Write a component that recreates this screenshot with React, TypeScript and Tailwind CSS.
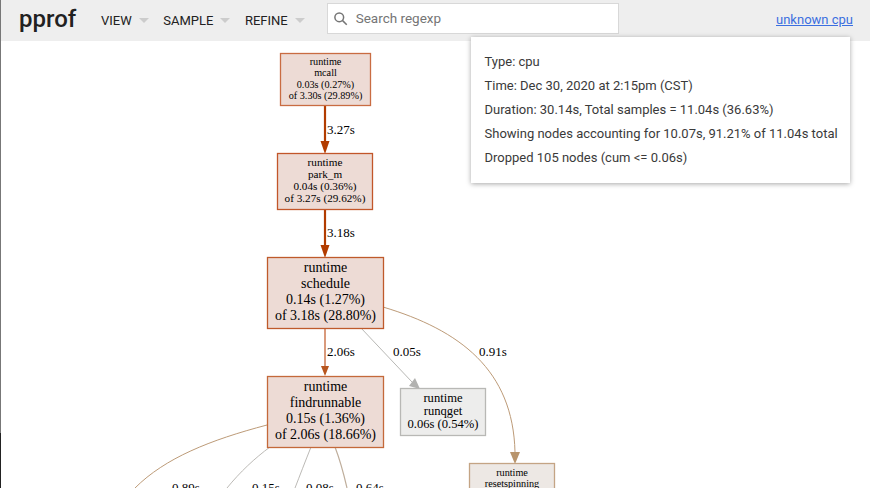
const menus = ["VIEW", "SAMPLE", "REFINE"];

const details = [
  "Type: cpu",
  "Time: Dec 30, 2020 at 2:15pm (CST)",
  "Duration: 30.14s, Total samples = 11.04s (36.63%)",
  "Showing nodes accounting for 10.07s, 91.21% of 11.04s total",
  "Dropped 105 nodes (cum <= 0.06s)",
];

type GraphNode = {
  x: number;
  y: number;
  w: number;
  h: number;
  fill: string;
  stroke: string;
  size: number;
  lines: [string, number][];
};

const nodes: GraphNode[] = [
  {
    x: 280, y: 53, w: 90, h: 52, fill: "#eddbd5", stroke: "#c96c42", size: 10.2,
    lines: [["runtime", 65], ["mcall", 76], ["0.03s (0.27%)", 88], ["of 3.30s (29.89%)", 99]],
  },
  {
    x: 277, y: 153, w: 95, h: 56, fill: "#eddbd5", stroke: "#c2562a", size: 11.2,
    lines: [["runtime", 166], ["park_m", 178], ["0.04s (0.36%)", 190], ["of 3.27s (29.62%)", 202]],
  },
  {
    x: 267, y: 257, w: 116, h: 71, fill: "#eddbd5", stroke: "#bf5a2b", size: 14,
    lines: [["runtime", 272], ["schedule", 288], ["0.14s (1.27%)", 304], ["of 3.18s (28.80%)", 320]],
  },
  {
    x: 267, y: 376, w: 116, h: 71, fill: "#eddbd5", stroke: "#c4693a", size: 14,
    lines: [["runtime", 391], ["findrunnable", 407], ["0.15s (1.36%)", 423], ["of 2.06s (18.66%)", 439]],
  },
  {
    x: 400, y: 388, w: 85, h: 47, fill: "#ededec", stroke: "#b8b8b5", size: 12.6,
    lines: [["runtime", 402], ["runqget", 415], ["0.06s (0.54%)", 428]],
  },
  {
    x: 469, y: 463, w: 85, h: 40, fill: "#ede8e4", stroke: "#c4a484", size: 10.2,
    lines: [["runtime", 476], ["resetspinning", 487]],
  },
];

const labels: [string, number, number][] = [
  ["3.27s", 327, 134],
  ["3.18s", 327, 237],
  ["2.06s", 327, 356],
  ["0.05s", 393, 356],
  ["0.91s", 479, 356],
  ["0.89s", 172, 492],
  ["0.15s", 252, 492],
  ["0.08s", 306, 492],
  ["0.64s", 356, 492],
];

function CallGraph() {
  return (
    <svg viewBox="0 41 870 447" className="block w-[870px] h-[447px]">
      {/* edges */}
      <path d="M325 105 L325 143" fill="none" stroke="#b23c00" strokeWidth="2.2" />
      <path d="M320.5 141 L325 154 L329.5 141 Z" fill="#b23c00" />
      <path d="M325 209 L325 247" fill="none" stroke="#b23c00" strokeWidth="2.2" />
      <path d="M320.5 245 L325 258 L329.5 245 Z" fill="#b23c00" />
      <path d="M325 328 L325 368" fill="none" stroke="#d99a7c" strokeWidth="2" />
      <path d="M321 366 L325 376 L329 366 Z" fill="#b8561f" />
      <path d="M361 328 L412 382" fill="none" stroke="#b8b8b5" strokeWidth="1" />
      <path d="M409 386 L420 389 L415 378 Z" fill="#b2b2b0" />
      <path d="M383 307 C460 330 513 370 515 452" fill="none" stroke="#bd9b78" strokeWidth="1" />
      <path d="M510 452 L515 464 L520 452 Z" fill="#b8946c" />
      <path d="M267 425 C210 440 165 458 135 488" fill="none" stroke="#bd9b78" strokeWidth="1" />
      <path d="M270 447 C255 458 240 472 227 488" fill="none" stroke="#bcbab6" strokeWidth="1" />
      <path d="M311 447 C305 462 300 475 295 488" fill="none" stroke="#bcbab6" strokeWidth="1" />
      <path d="M335 447 C340 460 344 475 347 488" fill="none" stroke="#bfae9c" strokeWidth="1.2" />

      {nodes.map((n) => (
        <g key={n.y}>
          <rect x={n.x + 0.5} y={n.y + 0.5} width={n.w} height={n.h} fill={n.fill} stroke={n.stroke} strokeWidth="1.3" />
          {n.lines.map(([text, y]) => (
            <text
              key={text}
              x={n.x + n.w / 2 + 0.5}
              y={y}
              textAnchor="middle"
              fontSize={n.size}
              fontFamily="'Liberation Serif', serif"
              fill="#000"
            >
              {text}
            </text>
          ))}
        </g>
      ))}

      {labels.map(([text, x, y]) => (
        <text key={text + x} x={x} y={y} fontSize="13" fontFamily="'Liberation Serif', serif" fill="#000">
          {text}
        </text>
      ))}
    </svg>
  );
}

export default function App() {
  return (
    <div className="relative h-[488px] w-[870px] overflow-hidden bg-white font-['Roboto',sans-serif]">
      <header className="flex h-[41px] items-center bg-[#eeeeee] pl-[19px]">
        <h1 className="w-[82px] text-[24px] leading-none font-medium text-[#212121] mb-[3px]">pprof</h1>
        <nav className="flex items-center gap-[14.5px]">
          {menus.map((m) => (
            <div key={m} className="flex items-center gap-[7px] text-[13px] text-[#212121]">
              {m}
              <span className="h-0 w-0 border-x-[5px] border-t-[5px] border-x-transparent border-t-[#cccccc]" />
            </div>
          ))}
        </nav>
        <div className="ml-[22px] flex h-[31px] w-[292px] items-center gap-[8px] border border-[#d8d8d8] bg-white pl-[5px] mb-[4px]">
          <svg viewBox="0 0 24 24" className="h-[15px] w-[15px] fill-none stroke-[#757575] stroke-[2.4]">
            <circle cx="10" cy="10" r="7" />
            <path d="M15 15 L22 22" />
          </svg>
          <span className="text-[13.5px] text-[#757575]">Search regexp</span>
        </div>
        <a href="#" className="ml-auto mr-[17px] text-[13px] text-[#3b6fe0] underline mb-[1px]">
          unknown cpu
        </a>
      </header>
      <CallGraph />
      <div className="absolute left-[471px] top-[37px] flex h-[146px] w-[379px] flex-col gap-[6px] bg-white pl-[13.5px] pt-[16px] text-[13px] leading-[18px] text-[#3a3a3a] shadow-[0_1px_5px_rgba(0,0,0,0.35)]">
        {details.map((d) => (
          <div key={d}>{d}</div>
        ))}
      </div>
      {/* edge of the window behind, 1px down the left side */}
      <div className="absolute left-0 top-0 flex h-full w-px flex-col">
        <div className="flex-1 bg-[#777777]" />
        <div className="h-[55px] bg-[#222222]" />
      </div>
    </div>
  );
}
